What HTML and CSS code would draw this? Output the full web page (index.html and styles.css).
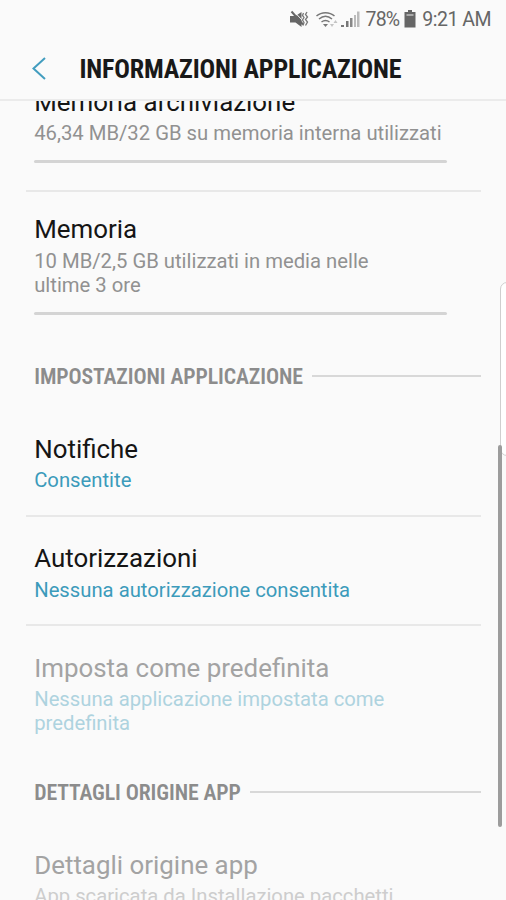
FILE: index.html
```html
<!DOCTYPE html>
<html lang="it">
<head>
<meta charset="utf-8">
<title>Informazioni applicazione</title>
<link rel="stylesheet" href="styles.css">
</head>
<body>
<div class="screen">
  <div class="status">
    <svg class="status-icons" width="72" height="22" viewBox="0 0 72 22">
      <path d="M0 8h5.500l6-4v15l-6-4.500H0z" fill="#666"/>
      <path d="M3.500 3l9.500 10" stroke="#fafafa" stroke-width="1"/>
      <path d="M1.500 3.500l11.500 13" stroke="#666" stroke-width="2"/>
      <path d="M13.500 5l-1 2.500 1.500 2-1.500 2.500 1.500 2.500-1 3M17 4l-1.500 2.500 2 2.500-2 2.500 2 2.500-2 3.500" fill="none" stroke="#777" stroke-width="1.300"/>
      <path d="M26.500 8c5-4.500 13-4.500 18 0M29 11c4-3.500 9-3.500 13 0M31.500 14c2.500-2 5.500-2 8 0" fill="none" stroke="#777" stroke-width="1.500"/>
      <path d="M33 16h5l-2.500 3z" fill="#777"/>
      <path d="M45.500 12l2 3h-4zM42 19l-2-3h4z" fill="#c4c4c4"/>
      <path d="M51 17h3v2h-3zM56 13h2.500v6H56z" fill="#777"/>
      <path d="M60 10h2.500v9H60z" fill="#888"/>
      <path d="M64 7h2v12h-2zM67 3.500h2.500V19H67z" fill="#bbb"/>
    </svg>
    <span class="pct">78%</span>
    <svg class="battery" width="12" height="18" viewBox="0 0 12 18">
      <path d="M4 0h4v2h3.500v15.500H.5V2H4z" fill="#666"/>
      <path d="M2.500 4h7v2h-7z" fill="#aaa"/>
    </svg>
    <span class="time">9:21 AM</span>
  </div>
  <header class="appbar">
    <svg class="back" width="16" height="24" viewBox="0 0 16 24"><path d="M14 1L2.500 11.500 14 22" fill="none" stroke="#429dbf" stroke-width="2"/></svg>
    <h1>INFORMAZIONI APPLICAZIONE</h1>
  </header>
  <main class="content">
    <section class="row first">
      <h2>Memoria archiviazione</h2>
      <p>46,34 MB/32 GB su memoria interna utilizzati</p>
      <div class="bar"></div>
    </section>
    <section class="row memory">
      <h2>Memoria</h2>
      <p>10 MB/2,5 GB utilizzati in media nelle<br>ultime 3 ore</p>
      <div class="bar"></div>
    </section>
    <h3 class="section"><span>IMPOSTAZIONI APPLICAZIONE</span></h3>
    <section class="row notify">
      <h2>Notifiche</h2>
      <p class="link">Consentite</p>
    </section>
    <section class="row perms">
      <h2>Autorizzazioni</h2>
      <p class="link">Nessuna autorizzazione consentita</p>
    </section>
    <section class="row default disabled">
      <h2>Imposta come predefinita</h2>
      <p class="link">Nessuna applicazione impostata come<br>predefinita</p>
    </section>
    <h3 class="section"><span>DETTAGLI ORIGINE APP</span></h3>
    <section class="row origin disabled">
      <h2>Dettagli origine app</h2>
      <p>App scaricata da Installazione pacchetti</p>
    </section>
  </main>
  <div class="edge-panel"></div>
  <div class="scrollbar"></div>
</div>
</body>
</html>
```
FILE: styles.css
```css
* { box-sizing: border-box; margin: 0; padding: 0; }
body { background: #fafafa; font-family: Roboto, sans-serif; }
.screen { position: relative; width: 506px; height: 900px; overflow: hidden; display: flex; flex-direction: column; background: #fafafa; }
.status { height: 38px; flex: none; display: flex; align-items: center; justify-content: flex-end; padding-right: 15px; color: #666; font-size: 19.5px; }
.status-icons { margin-right: 4px; }
.pct { letter-spacing: -0.8px; margin-right: 5px; }
.battery { margin-right: 6px; }
.time { letter-spacing: -0.5px; }
.appbar { height: 63px; flex: none; display: flex; align-items: center; padding-left: 31px; border-bottom: 2px solid #ebebeb; }
.back { margin-right: 32.5px; }
h1 { font-family: "Roboto Condensed", Roboto, sans-serif; font-stretch: 75%; font-weight: 700; font-size: 26px; letter-spacing: -0.18px; line-height: 32px; color: #191919; white-space: nowrap; }
.content { flex: 1; min-height: 0; overflow: hidden; }
.row { margin: 0 25px 0 26px; padding-left: 8.2px; }
h2 { font-weight: 400; font-size: 25.9px; line-height: 35px; color: #151515; white-space: nowrap; }
p { margin-top: 2px; font-size: 20.25px; line-height: 24px; color: #919191; white-space: nowrap; }
.link { color: #3c9bbb; }
.bar { width: 413px; height: 3px; margin: 15px 0 0 -0.2px; background: #d4d4d4; border-radius: 2px; }
.first { margin-top: -16px; height: 107px; border-bottom: 2px solid #e8e8e8; }
.first p, .notify p, .default p, .origin p { margin-top: 1px; }
.memory { height: 172px; padding-top: 20px; }
.section { display: flex; align-items: center; height: 24px; margin: 0 25px 0 34.2px; font-family: "Roboto Condensed", Roboto, sans-serif; font-stretch: 75%; font-weight: 600; font-size: 21.8px; letter-spacing: -0.1px; line-height: 24px; color: #8c8c8c; white-space: nowrap; }
.section span { padding-top: 1px; }
.section::after { content: ""; flex: 1; height: 2px; margin-left: 9px; background: #d8d8d8; }
.notify { height: 129px; padding-top: 44px; border-bottom: 2px solid #e8e8e8; }
.perms { height: 109px; padding-top: 24px; border-bottom: 2px solid #e8e8e8; }
.default { height: 154px; padding-top: 25px; }
.origin { padding-top: 44px; }
.disabled h2 { color: #a3a3a3; }
.disabled p { color: #cdcdcd; }
.disabled .link { color: #aed3df; }
.edge-panel { position: absolute; left: 500px; top: 282px; width: 20px; height: 174px; background: #fff; border: 1px solid #cfcfcf; border-radius: 7px; }
.scrollbar { position: absolute; left: 498px; top: 445px; width: 4px; height: 382px; border-radius: 2px; background: #9c9c9c; }
```
